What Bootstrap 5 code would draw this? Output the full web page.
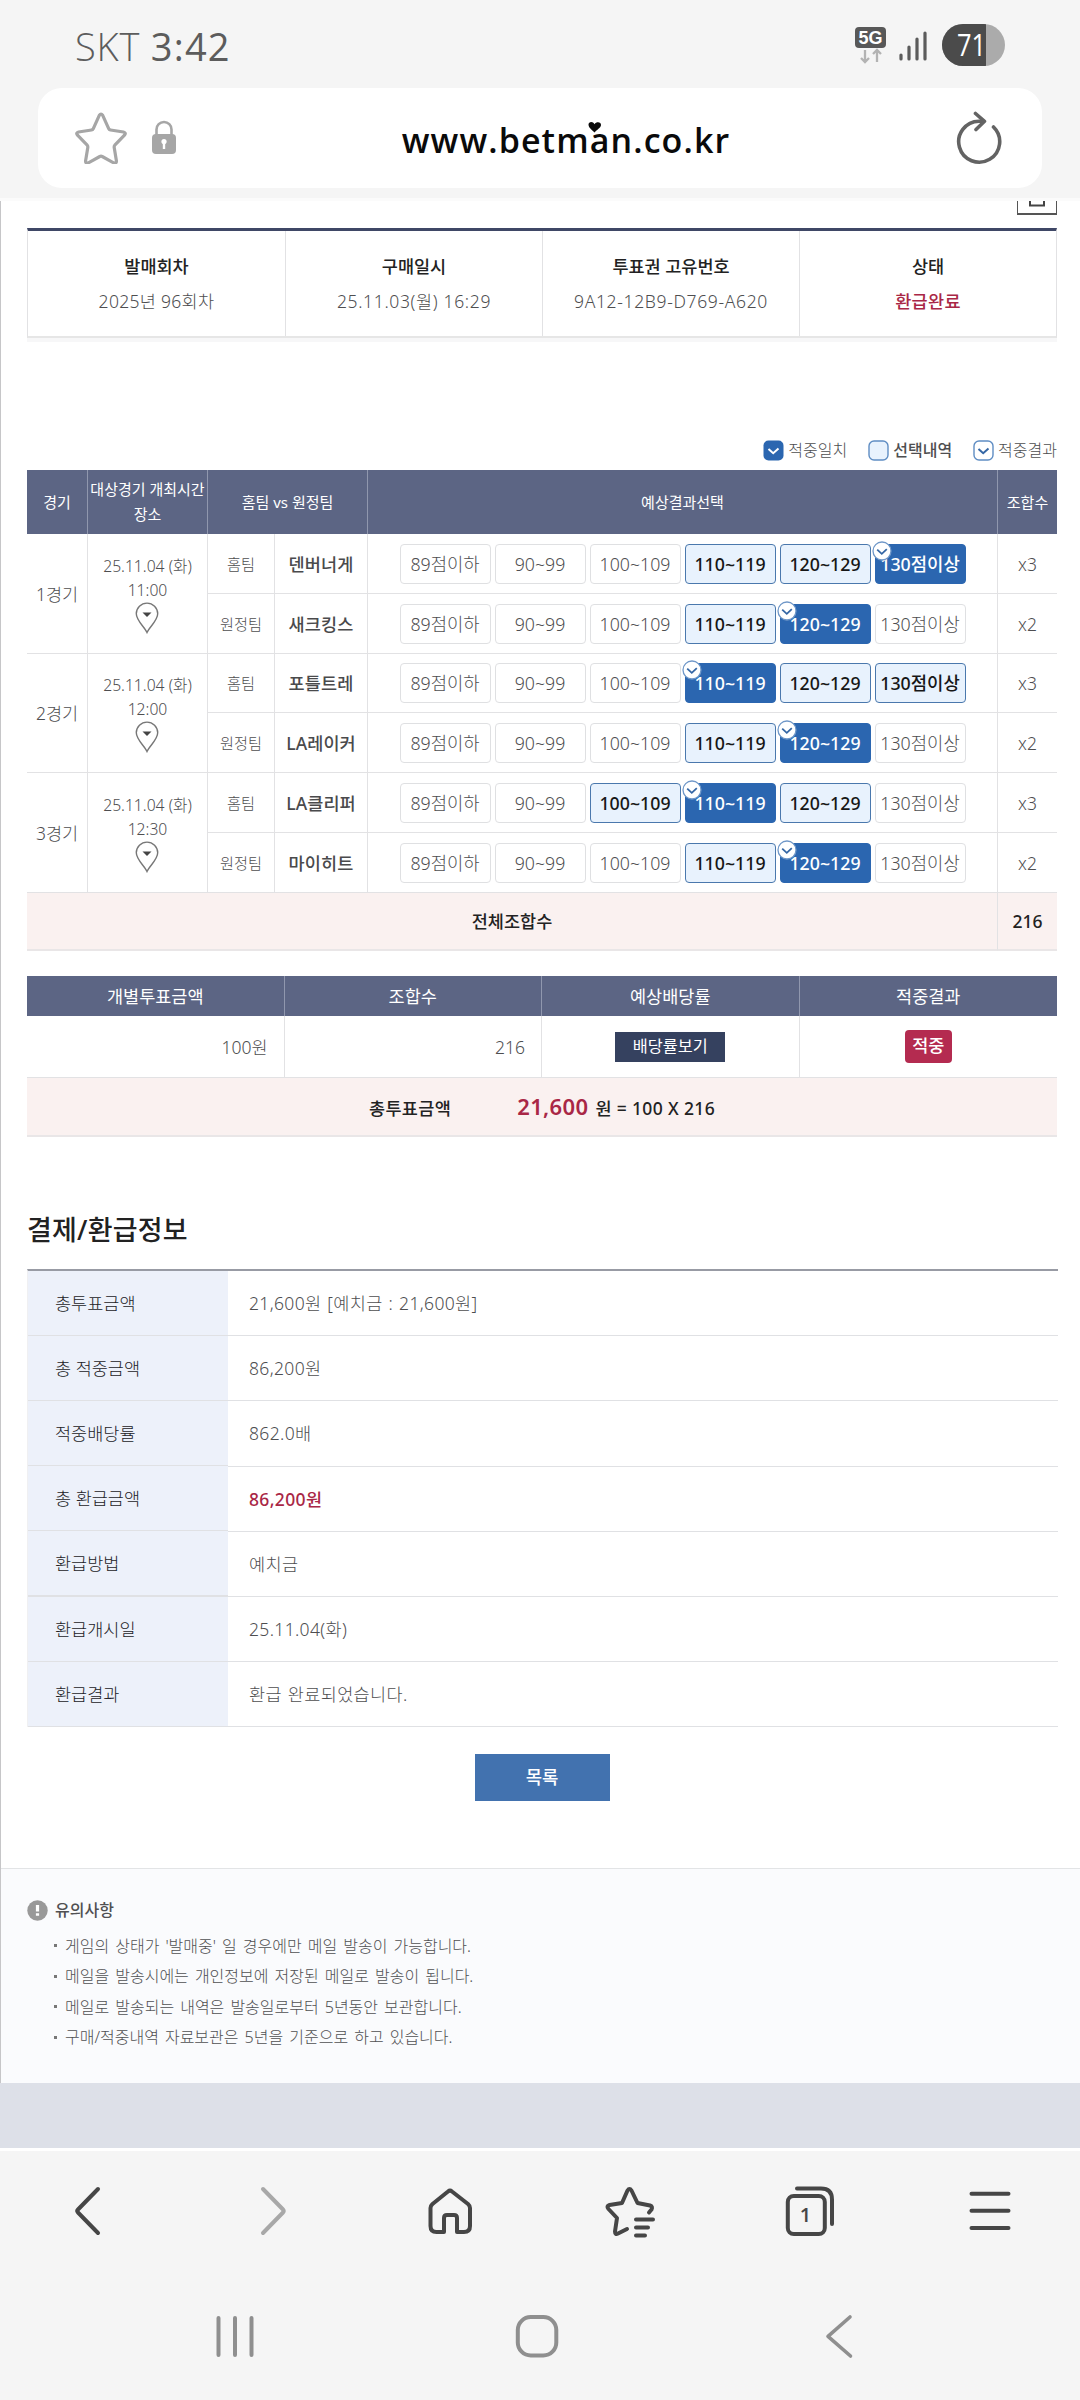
<!DOCTYPE html>
<html lang="ko">
<head>
<meta charset="utf-8">
<meta name="viewport" content="width=device-width, initial-scale=1">
<title>betman</title>
<link href="https://cdn.jsdelivr.net/npm/bootstrap@5.3.0/dist/css/bootstrap.min.css" rel="stylesheet">
<style>
body{width:1080px;height:2400px;overflow:hidden;background:#f5f5f5;color:#4e4e50;font-family:"Noto Sans","Noto Sans CJK KR",sans-serif;font-size:17.5px;font-weight:300;line-height:24px}
svg{display:block;flex:none}
.status{height:88px;padding:3px 75px 0 75px}
.clock{font-family:"Open Sans","Noto Sans",sans-serif;font-size:38px;color:#5c5c5c;line-height:88px;white-space:pre;letter-spacing:.8px}
.clock b{font-weight:500;letter-spacing:1.2px}
.omnibox{height:100px;margin:0 38px;border-radius:24px;padding:0 39px 0 37px}
.site-url{font-family:"Open Sans",sans-serif;font-weight:600;font-size:34px;line-height:50px;color:#0a0a0a;letter-spacing:1.1px;top:2px}
.heart{left:186px;top:6px}
.chrome-end{height:13px;border-bottom:3px solid #fbfbfb}
.page-body{height:1882px;border-left:1px solid #c6c6c8;padding:0 23px 0 26px;background:#fff}
.print-btn{width:40px;height:14px;border:1px solid #555;border-top:0;border-bottom-width:2px;margin-top:0}
.summary{margin-top:13px;border-top:3px solid #3f4766;border-bottom:2px solid #e6e6e6;box-shadow:0 4px 0 #f7f7f8;height:110px;border-left:1px solid #e2e2e4;border-right:1px solid #e2e2e4}
.summary>div+div{border-left:1px solid #e2e2e4}
.summary>div{padding-top:23px}
.summary dt{font-weight:500;color:#222;line-height:24px}
.summary dd{margin:11px 0 0;line-height:24px;letter-spacing:.3px}
.summary .wide{letter-spacing:.65px}
.crimson{color:#a92746!important}
.legend{margin-top:102px;height:30px;font-size:16px;gap:21px;line-height:20px;padding-bottom:10px}
.legend span{display:flex;align-items:center;gap:4px}
.mid{font-weight:500}
.grid-t{table-layout:fixed;border-collapse:separate;border-spacing:0;width:1030px;color:inherit}
.grid-t>:not(caption)>*>*{padding:0;border:0 solid #e2e2e4;border-right-width:1px;border-bottom-width:1px;text-align:center;vertical-align:middle;color:inherit;background:transparent}
.grid-t>:not(caption)>*>:last-child{border-right-width:0}
.games>tbody>tr>.side+td+td+td,.games>tbody>tr>td:last-child{border-right-width:0}
.grid-t>thead>tr>th{background:#5c6584;color:#fff;font-weight:400;border-bottom:0;border-right-color:#9097ae}
.games thead th{font-size:15px;line-height:25px;height:64px}
.games tr{height:60px}
.games tr.r59{height:59px}
.when{font-size:15.7px}
.when svg{margin:0 auto;position:relative;left:-1px}
.side{font-size:15.2px}
.team{font-weight:500;color:#4a4a4c!important;letter-spacing:.1px}
.grid-t>tfoot>tr>td{background:#faf1f0;color:#222;font-weight:500;border-bottom:2px solid #e9e6e7}
.chip{width:91px;height:40px;border:1px solid #dfe0e2;border-radius:4px;line-height:38px;font-size:17.75px;position:relative}
.chip.sel{background:#e8f2fd;border-color:#4a78ad;color:#161616;font-weight:500}
.chip.hit{background:#2b66b0;border-color:#2b66b0;color:#fff;font-weight:500}
.chip svg{position:absolute;left:-4px;top:-4px}
.picks{gap:4px}
.sums{margin-top:25px}
.sums thead th{height:40px}
.odds{width:110px;height:30px;background:#35415f;color:#fff;font-size:16.3px;line-height:29px;font-weight:400}
.won{width:47px;height:33px;border-radius:4px;background:#b42b50;color:#fff;font-weight:500;line-height:31px}
.total{letter-spacing:.35px}
.big{font-size:22px;font-weight:600}
.sec-title{font-size:27px;line-height:40px;font-weight:500;color:#222;margin:73px 0 0;height:59px;letter-spacing:.2px}
.pay{border-top:2px solid #989ba4;border-left:1px solid #f0f0f2;width:1031px}
.pay>div{height:65.2px;border-bottom:1px solid #e0e1e4}
.pay .k{width:200px;background:#edf1fa;padding-left:27px;color:#222226;height:65px;border-bottom:1px solid #e0e1e4}
.pay .v{padding-left:21px;letter-spacing:.35px;word-spacing:1px}
.list-btn{width:135px;height:47px;background:#4272af;border-radius:0;color:#fff;font-size:17.8px;font-weight:500;margin:27px auto 0;line-height:47px}
.notice{margin:67px -23px 0 -26px;height:215px;border-top:1px solid #e2e4e6;background:#fafbfd;padding:29px 26px 0;color:#505052}
.notice ul{margin:8px 0 0;padding:0;list-style:none;font-size:16px;word-spacing:1.9px}
.notice li{height:30.6px;line-height:30px;padding-left:27px;display:flex;align-items:center;gap:8px}
.notice li::before{content:"";width:3px;height:3px;background:#777}
.band{height:65px;background:#dde0e8;border-bottom:0}
.toolbar{height:127px;border-top:3px solid #fff;padding-bottom:4px}
.toolbar>div{width:180px}
.sysbar{height:125px;padding:0 90px 3px 84px}
</style>
<script src="https://cdn.jsdelivr.net/npm/bootstrap@5.3.0/dist/js/bootstrap.bundle.min.js"></script>
</head>
<body>
<svg width="0" height="0" class="position-absolute">
<symbol id="ck" viewBox="0 0 20 20"><circle cx="10" cy="10" r="9" fill="#fff" stroke="#6f97c8" stroke-width="1.3"/><path d="M5.2 8.6l4.6 4.2 5-4.6" fill="none" stroke="#3567a5" stroke-width="1.8"/></symbol>
<symbol id="pin" viewBox="0 0 24 32"><path d="M12 30.5C9.5 25 1.3 18.5 1.3 11.8a10.7 10.7 0 0 1 21.4 0C22.700 18.500 14.500 25 12 30.500z" fill="#fff" stroke="#777" stroke-width="1.4"/><path d="M7.500 10.500h9L12 15z" fill="#444"/></symbol>
</svg>

<header>
<div class="status d-flex justify-content-between align-items-center">
  <div class="clock">SKT <b>3:42</b></div>
  <svg width="152" height="46" viewBox="0 0 152 46"><rect x="2" y="4" width="31" height="21" rx="4" fill="#585858"/><text x="17.500" y="20.500" font-size="18" font-weight="700" fill="#fff" text-anchor="middle" font-family="Liberation Sans">5G</text><path d="M12 27v12m-4-4l4 4 4-4M24 39V27m-4 4l4-4 4 4" fill="none" stroke="#b3b3b3" stroke-width="2.300"/><path d="M48 32v4M56 24v12M64 16v20M72 10v26" stroke="#5c5c5c" stroke-width="3.200" stroke-linecap="round"/><clipPath id="bt"><rect x="89" y="1" width="63" height="42" rx="21"/></clipPath><g clip-path="url(#bt)"><path d="M89 0h63v44H89z" fill="#ababab"/><path d="M89 0h44v44H89z" fill="#4b4b4b"/></g><text x="118.500" y="33" font-size="31" fill="#fff" text-anchor="middle" font-family="Open Sans" font-weight="400" textLength="29" lengthAdjust="spacingAndGlyphs">71</text></svg>
</div>
<div class="omnibox bg-white d-flex align-items-center justify-content-between">
  <div class="d-flex align-items-center">
    <svg width="52" height="52" viewBox="0 0 52 52"><path d="M24.400 3.200q1.600-2.400 3.200 0l6.200 13.600q.5 1 1.700 1.200l13 2q3 .8 1 3.200l-9.700 10q-.8 1-.6 2.200l2.200 13.400q.2 3.200-2.800 2L27.200 44.500q-1.200-.6-2.400 0L13.400 50.800q-3 1.200-2.800-2l2.200-13.400q.2-1.200-.6-2.200l-9.700-10q-2-2.400 1-3.200l13-2q1.200-.2 1.700-1.200z" fill="none" stroke="#a6a6a6" stroke-width="3.200" stroke-linejoin="round"/></svg>
    <svg class="ms-4" width="26" height="36" viewBox="0 0 26 36"><path d="M5.500 15V9.500a7.500 7.500 0 0 1 15 0V15" fill="none" stroke="#a6a6a6" stroke-width="2.600"/><rect x="1" y="14" width="24" height="20" rx="4" fill="#a6a6a6"/><circle cx="13" cy="21.500" r="2.600" fill="#fff"/><path d="M11.800 22h2.400v7h-2.400z" fill="#fff"/></svg>
  </div>
  <div class="site-url position-relative">www.betman.co.kr
    <svg class="heart position-absolute" width="14" height="12" viewBox="0 0 14 12"><path d="M6.500 11.500C3 8 .5 6.500.5 3.500.5.500 5 0 6.500 3.200 8.500 0 13.500 1 13 4.200 12.500 7 9 8.500 6.500 11.500z" fill="#0a0a0a"/></svg>
  </div>
  <svg width="48" height="54" viewBox="0 0 48 54"><path d="M28.500 10.200H24A20.500 20.500 0 1 0 38.500 16" fill="none" stroke="#636363" stroke-width="3.600" stroke-linecap="round"/><path d="M20.500 2.500l9 7.800-8.500 8.200" fill="none" stroke="#636363" stroke-width="3.600" stroke-linecap="round" stroke-linejoin="round"/></svg>
</div>
<div class="chrome-end"></div>
</header>

<main class="page-body">
<div class="print-btn ms-auto"><svg class="mx-auto" width="16" height="6"><path d="M1 0v5M15 0v5M0 4.500h16" stroke="#444" stroke-width="2"/></svg></div>
<dl class="summary row g-0 text-center mb-0">
  <div class="col-3"><dt>발매회차</dt><dd>2025년 96회차</dd></div>
  <div class="col-3"><dt>구매일시</dt><dd class="wide">25.11.03(월) 16:29</dd></div>
  <div class="col-3"><dt>투표권 고유번호</dt><dd class="wide">9A12-12B9-D769-A620</dd></div>
  <div class="col-3"><dt>상태</dt><dd class="crimson mid">환급완료</dd></div>
</dl>

<div class="legend d-flex justify-content-end align-items-center">
  <span><svg width="21" height="21"><rect x=".5" y=".5" width="20" height="20" rx="5" fill="#2b66b0"/><path d="M5.500 9l4.700 4.200L15.500 8.500" fill="none" stroke="#fff" stroke-width="2"/></svg>적중일치</span>
  <span class="mid"><svg width="21" height="21"><rect x="1" y="1" width="19" height="19" rx="5" fill="#e8f2fd" stroke="#5f8dc3" stroke-width="1.400"/></svg>선택내역</span>
  <span><svg width="21" height="21"><rect x="1" y="1" width="19" height="19" rx="5" fill="#fff" stroke="#5f8dc3" stroke-width="1.400"/><path d="M5.500 9l4.700 4.200L15.500 8.500" fill="none" stroke="#3567a5" stroke-width="2"/></svg>적중결과</span>
</div>

<table class="table grid-t games mb-0">
<colgroup><col style="width:61px"><col style="width:120px"><col style="width:67px"><col style="width:93px"><col style="width:630px"><col style="width:59px"></colgroup>
<thead><tr><th>경기</th><th>대상경기 개최시간<br>장소</th><th colspan="2">홈팀 vs 원정팀</th><th>예상결과선택</th><th>조합수</th></tr></thead>
<tbody>
<tr><td rowspan="2">1경기</td><td rowspan="2" class="when">25.11.04 (화)<br>11:00<svg width="24" height="32"><use href="#pin"/></svg></td><td class="side">홈팀</td><td class="team">덴버너게</td><td><div class="picks d-flex justify-content-center"><div class="chip">89점이하</div><div class="chip">90~99</div><div class="chip">100~109</div><div class="chip sel">110~119</div><div class="chip sel">120~129</div><div class="chip hit">130점이상<svg width="20" height="20"><use href="#ck"/></svg></div></div></td><td>x3</td></tr>
<tr><td class="side">원정팀</td><td class="team">새크킹스</td><td><div class="picks d-flex justify-content-center"><div class="chip">89점이하</div><div class="chip">90~99</div><div class="chip">100~109</div><div class="chip sel">110~119</div><div class="chip hit">120~129<svg width="20" height="20"><use href="#ck"/></svg></div><div class="chip">130점이상</div></div></td><td>x2</td></tr>
<tr class="r59"><td rowspan="2">2경기</td><td rowspan="2" class="when">25.11.04 (화)<br>12:00<svg width="24" height="32"><use href="#pin"/></svg></td><td class="side">홈팀</td><td class="team">포틀트레</td><td><div class="picks d-flex justify-content-center"><div class="chip">89점이하</div><div class="chip">90~99</div><div class="chip">100~109</div><div class="chip hit">110~119<svg width="20" height="20"><use href="#ck"/></svg></div><div class="chip sel">120~129</div><div class="chip sel">130점이상</div></div></td><td>x3</td></tr>
<tr><td class="side">원정팀</td><td class="team">LA레이커</td><td><div class="picks d-flex justify-content-center"><div class="chip">89점이하</div><div class="chip">90~99</div><div class="chip">100~109</div><div class="chip sel">110~119</div><div class="chip hit">120~129<svg width="20" height="20"><use href="#ck"/></svg></div><div class="chip">130점이상</div></div></td><td>x2</td></tr>
<tr><td rowspan="2">3경기</td><td rowspan="2" class="when">25.11.04 (화)<br>12:30<svg width="24" height="32"><use href="#pin"/></svg></td><td class="side">홈팀</td><td class="team">LA클리퍼</td><td><div class="picks d-flex justify-content-center"><div class="chip">89점이하</div><div class="chip">90~99</div><div class="chip sel">100~109</div><div class="chip hit">110~119<svg width="20" height="20"><use href="#ck"/></svg></div><div class="chip sel">120~129</div><div class="chip">130점이상</div></div></td><td>x3</td></tr>
<tr><td class="side">원정팀</td><td class="team">마이히트</td><td><div class="picks d-flex justify-content-center"><div class="chip">89점이하</div><div class="chip">90~99</div><div class="chip">100~109</div><div class="chip sel">110~119</div><div class="chip hit">120~129<svg width="20" height="20"><use href="#ck"/></svg></div><div class="chip">130점이상</div></div></td><td>x2</td></tr>
</tbody>
<tfoot><tr style="height:58px"><td colspan="5">전체조합수</td><td>216</td></tr></tfoot>
</table>

<table class="table grid-t sums mb-0">
<thead><tr><th>개별투표금액</th><th>조합수</th><th>예상배당률</th><th>적중결과</th></tr></thead>
<tbody><tr style="height:62px"><td class="text-end pe-3">100원</td><td class="text-end pe-3">216</td><td><div class="odds mx-auto">배당률보기</div></td><td><div class="won mx-auto">적중</div></td></tr></tbody>
<tfoot><tr style="height:59px"><td colspan="4"><div class="total d-flex justify-content-center align-items-baseline"><span>총투표금액</span><span class="big crimson" style="margin-left:66px">21,600</span><span style="margin-left:7px">원 = 100 X 216</span></div></td></tr></tfoot>
</table>

<h2 class="sec-title">결제/환급정보</h2>
<div class="pay">
  <div class="d-flex align-items-center"><div class="k d-flex align-items-center">총투표금액</div><div class="v">21,600원 [예치금 : 21,600원]</div></div>
  <div class="d-flex align-items-center"><div class="k d-flex align-items-center">총 적중금액</div><div class="v">86,200원</div></div>
  <div class="d-flex align-items-center"><div class="k d-flex align-items-center">적중배당률</div><div class="v">862.0배</div></div>
  <div class="d-flex align-items-center"><div class="k d-flex align-items-center">총 환급금액</div><div class="v crimson mid">86,200원</div></div>
  <div class="d-flex align-items-center"><div class="k d-flex align-items-center">환급방법</div><div class="v">예치금</div></div>
  <div class="d-flex align-items-center"><div class="k d-flex align-items-center">환급개시일</div><div class="v">25.11.04(화)</div></div>
  <div class="d-flex align-items-center"><div class="k d-flex align-items-center">환급결과</div><div class="v">환급 완료되었습니다.</div></div>
</div>
<a class="list-btn btn d-block p-0 border-0">목록</a>

<section class="notice">
  <div class="d-flex align-items-center mid" style="font-size:16px"><svg width="21" height="21" style="margin-right:7px"><circle cx="10.500" cy="10.500" r="10.200" fill="#999"/><path d="M10.500 5v6.500M10.500 13.200v2.600" stroke="#fff" stroke-width="3.200"/></svg>유의사항</div>
  <ul>
    <li>게임의 상태가 '발매중' 일 경우에만 메일 발송이 가능합니다.</li>
    <li>메일을 발송시에는 개인정보에 저장된 메일로 발송이 됩니다.</li>
    <li>메일로 발송되는 내역은 발송일로부터 5년동안 보관합니다.</li>
    <li>구매/적중내역 자료보관은 5년을 기준으로 하고 있습니다.</li>
  </ul>
</section>
</main>
<div class="band"></div>

<nav class="toolbar d-flex align-items-center">
  <div><svg class="mx-auto" width="54" height="54" fill="none" stroke="#464646" stroke-width="4" stroke-linecap="round" stroke-linejoin="round"><path d="M35 5L15 25.500Q13.500 27 15 28.500L35 49"/></svg></div>
  <div><svg class="mx-auto" width="54" height="54" fill="none" stroke="#a8a8a8" stroke-width="4" stroke-linecap="round" stroke-linejoin="round"><path d="M20 5L40 25.500Q41.500 27 40 28.500L20 49"/></svg></div>
  <div><svg class="mx-auto" width="54" height="54" fill="none" stroke="#464646" stroke-width="4" stroke-linecap="round" stroke-linejoin="round"><path d="M25 7.500Q27 5.800 29 7.500L45 20Q47 21.800 47 24V42Q47 48 41 48H34V34Q34 31 31 31H24Q21 31 21 34V48H13.500Q7.500 48 7.500 42V24Q7.500 21.800 9.500 20z"/></svg></div>
  <div><svg class="mx-auto" width="54" height="54" fill="none" stroke="#464646" stroke-width="4" stroke-linecap="round" stroke-linejoin="round"><path d="M46 28.500L48.500 25.500Q50 22.500 47 21.500L34.500 19L28.500 6.500Q26.500 3.500 24.500 6.500L19 19L6.500 21Q3 22 5.500 25L14 34L12 47.500Q12 51 15 49.500L24 45M33 35.500H50M33 43.500H45M33 51.500H42"/></svg></div>
  <div><svg class="mx-auto" width="54" height="54" fill="none" stroke="#464646" stroke-width="4" stroke-linecap="round" stroke-linejoin="round"><rect x="4.800" y="12" width="37" height="38" rx="6"/><path d="M14 4.500H38Q49 4.500 49 15.500V40"/><text x="22.500" y="38" font-family="Open Sans" font-size="20" font-weight="600" fill="#464646" stroke="none" text-anchor="middle">1</text></svg></div>
  <div><svg class="mx-auto" width="54" height="54" fill="none" stroke="#464646" stroke-width="4" stroke-linecap="round"><path d="M8.500 9.700h37M8.500 26.800h37M8.500 43.900h37"/></svg></div>
</nav>
<nav class="sysbar row g-0 align-items-center">
  <div class="col-4"><svg class="mx-auto" width="50" height="50" stroke="#8f8f8f" stroke-width="4" stroke-linecap="round"><path d="M8.500 7v37M25 7v37M41.500 7v37"/></svg></div>
  <div class="col-4"><svg class="mx-auto" width="50" height="50"><rect x="5.800" y="6" width="38.500" height="38.500" rx="13" fill="none" stroke="#8f8f8f" stroke-width="4"/></svg></div>
  <div class="col-4"><svg class="mx-auto" width="50" height="50" fill="none" stroke="#8f8f8f" stroke-width="3.600" stroke-linecap="round" stroke-linejoin="round"><path d="M36 6L14 25.300L36.500 45"/></svg></div>
</nav>
</body>
</html>
